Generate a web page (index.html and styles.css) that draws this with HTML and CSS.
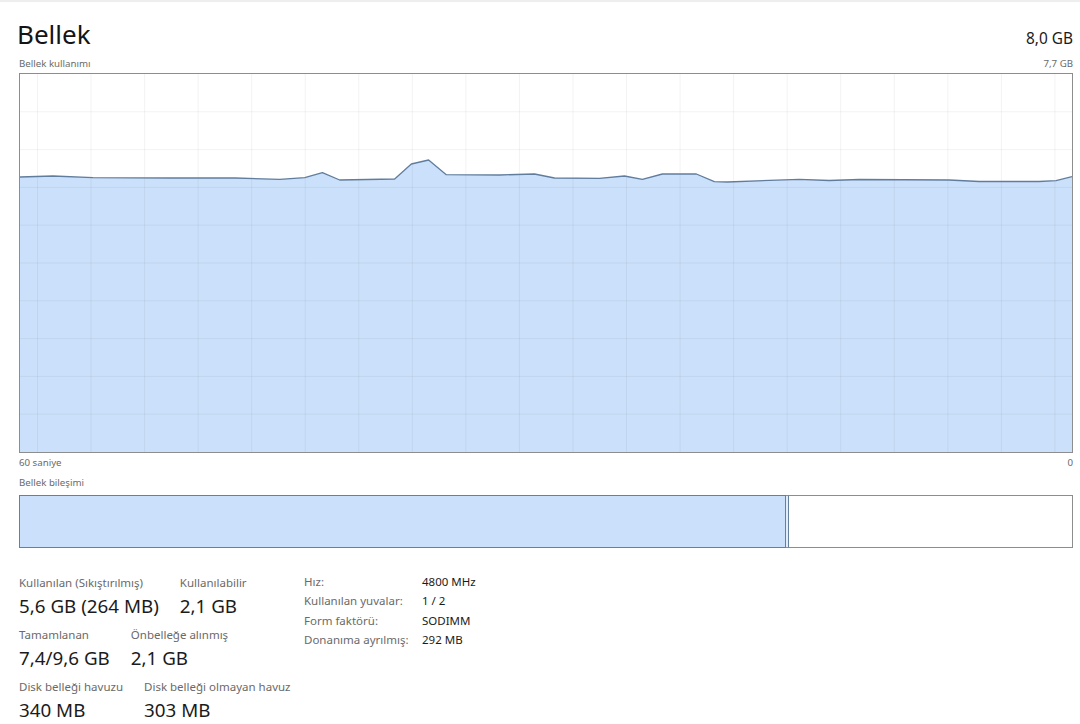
FILE: index.html
```html
<!DOCTYPE html>
<html lang="tr">
<head>
<meta charset="utf-8">
<title>Bellek</title>
<link rel="stylesheet" href="styles.css">
</head>
<body>
<main class="page">
  <header class="head">
    <h1 class="title">Bellek</h1>
    <span class="total">8,0 GB</span>
  </header>
  <div class="caption caption-top">
    <span>Bellek kullanımı</span>
    <span>7,7 GB</span>
  </div>
  <div class="graph">
    <svg class="graph-svg" viewBox="0 0 1053 378" preserveAspectRatio="none">
      <polygon class="area" points="0,103 33,102 73,103.7 150,104 215,104 260,105.3 285,103.7 302.7,98.7 320,106 375,105 391.7,90 409,86 426.7,100.7 480,101 515,100 535,104 580,104.3 605,102 623,105.3 643,100 677,100 695,107.7 708,108 780,105.3 810,106.5 840,105.5 930,106 960,107.5 1020,107.5 1037,106.7 1053,102.7 1053,378 0,378"/>
      <g class="grid">
        <line x1="17.5" y1="0" x2="17.5" y2="378"/>
        <line x1="71.1" y1="0" x2="71.1" y2="378"/>
        <line x1="124.7" y1="0" x2="124.7" y2="378"/>
        <line x1="178.3" y1="0" x2="178.3" y2="378"/>
        <line x1="231.9" y1="0" x2="231.9" y2="378"/>
        <line x1="285.5" y1="0" x2="285.5" y2="378"/>
        <line x1="339.1" y1="0" x2="339.1" y2="378"/>
        <line x1="392.7" y1="0" x2="392.7" y2="378"/>
        <line x1="446.3" y1="0" x2="446.3" y2="378"/>
        <line x1="499.9" y1="0" x2="499.9" y2="378"/>
        <line x1="553.5" y1="0" x2="553.5" y2="378"/>
        <line x1="607.1" y1="0" x2="607.1" y2="378"/>
        <line x1="660.7" y1="0" x2="660.7" y2="378"/>
        <line x1="714.3" y1="0" x2="714.3" y2="378"/>
        <line x1="767.9" y1="0" x2="767.9" y2="378"/>
        <line x1="821.5" y1="0" x2="821.5" y2="378"/>
        <line x1="875.1" y1="0" x2="875.1" y2="378"/>
        <line x1="928.7" y1="0" x2="928.7" y2="378"/>
        <line x1="982.3" y1="0" x2="982.3" y2="378"/>
        <line x1="1035.9" y1="0" x2="1035.9" y2="378"/>
        <line x1="0" y1="37.8" x2="1053" y2="37.8"/>
        <line x1="0" y1="75.6" x2="1053" y2="75.6"/>
        <line x1="0" y1="113.4" x2="1053" y2="113.4"/>
        <line x1="0" y1="151.2" x2="1053" y2="151.2"/>
        <line x1="0" y1="189" x2="1053" y2="189"/>
        <line x1="0" y1="226.8" x2="1053" y2="226.8"/>
        <line x1="0" y1="264.6" x2="1053" y2="264.6"/>
        <line x1="0" y1="302.4" x2="1053" y2="302.4"/>
        <line x1="0" y1="340.2" x2="1053" y2="340.2"/>
      </g>
      <polyline class="trace" points="0,103 33,102 73,103.7 150,104 215,104 260,105.3 285,103.7 302.7,98.7 320,106 375,105 391.7,90 409,86 426.7,100.7 480,101 515,100 535,104 580,104.3 605,102 623,105.3 643,100 677,100 695,107.7 708,108 780,105.3 810,106.5 840,105.5 930,106 960,107.5 1020,107.5 1037,106.7 1053,102.7"/>
    </svg>
  </div>
  <div class="caption caption-axis">
    <span>60 saniye</span>
    <span>0</span>
  </div>
  <div class="caption caption-comp">
    <span>Bellek bileşimi</span>
  </div>
  <div class="composition">
    <div class="seg seg-inuse"></div>
    <div class="seg seg-modified"></div>
    <div class="seg seg-standby"></div>
  </div>
  <section class="details">
    <div class="stats">
      <div class="stat-row">
        <div class="stat"><div class="stat-label">Kullanılan (Sıkıştırılmış)</div><div class="stat-value">5,6 GB (264 MB)</div></div>
        <div class="stat"><div class="stat-label">Kullanılabilir</div><div class="stat-value">2,1 GB</div></div>
      </div>
      <div class="stat-row">
        <div class="stat"><div class="stat-label">Tamamlanan</div><div class="stat-value">7,4/9,6 GB</div></div>
        <div class="stat"><div class="stat-label">Önbelleğe alınmış</div><div class="stat-value">2,1 GB</div></div>
      </div>
      <div class="stat-row">
        <div class="stat"><div class="stat-label">Disk belleği havuzu</div><div class="stat-value">340 MB</div></div>
        <div class="stat"><div class="stat-label">Disk belleği olmayan havuz</div><div class="stat-value">303 MB</div></div>
      </div>
    </div>
    <dl class="specs">
      <dt>Hız:</dt><dd>4800 MHz</dd>
      <dt>Kullanılan yuvalar:</dt><dd>1 / 2</dd>
      <dt>Form faktörü:</dt><dd>SODIMM</dd>
      <dt>Donanıma ayrılmış:</dt><dd>292 MB</dd>
    </dl>
  </section>
</main>
</body>
</html>
```

FILE: styles.css
```css
html, body {
  margin: 0;
  padding: 0;
  background: #ffffff;
}

body {
  font-family: "Noto Sans", "Open Sans", sans-serif;
  color: #1b1b1b;
  width: 1080px;
  height: 724px;
  overflow: hidden;
  border-top: 2px solid #eeeeee;
  box-sizing: border-box;
}

.page {
  padding: 16px 7px 0 19px;
  display: flex;
  flex-direction: column;
}

.head {
  display: flex;
  justify-content: space-between;
  align-items: baseline;
  height: 32px;
}

.title {
  margin: 0 0 0 -2px;
  font-size: 26px;
  line-height: 32px;
  font-weight: 400;
  color: #141414;
}

.total {
  font-size: 15.4px;
  line-height: 32px;
  color: #1b1b1b;
}

.caption {
  display: flex;
  justify-content: space-between;
  font-size: 9.7px;
  line-height: 14px;
  color: #6a6a6a;
}

.caption-top {
  margin-top: 7px;
  margin-bottom: 2px;
}

.caption-axis {
  margin-top: 3px;
}

.caption-comp {
  margin-top: 6px;
  margin-bottom: 5px;
}

.graph {
  height: 378px;
  border: 1px solid #8d8d8d;
  background: #ffffff;
}

.graph-svg {
  display: block;
  width: 100%;
  height: 100%;
}

.area {
  fill: #cbe0fa;
}

.grid line {
  stroke: rgba(0, 0, 0, 0.055);
  stroke-width: 1;
}

.trace {
  fill: none;
  stroke: #617d9e;
  stroke-width: 1.3;
  stroke-linejoin: round;
}

.composition {
  display: flex;
  height: 53px;
}

.seg {
  box-sizing: border-box;
  height: 100%;
}

.seg-inuse {
  flex: 0 0 767px;
  background: #cbe0fa;
  border: 1px solid #64809f;
}

.seg-modified {
  flex: 0 0 2px;
  background: #e3edf9;
  border-top: 1px solid #8d8d8d;
  border-bottom: 1px solid #8d8d8d;
}

.seg-standby {
  flex: 1 1 auto;
  background: #ffffff;
  border: 1px solid #8d8d8d;
  border-left-color: #64809f;
}

.details {
  display: flex;
  margin-top: 24px;
}

.stats {
  flex: 0 0 285px;
  display: flex;
  flex-direction: column;
  gap: 8px;
  padding-top: 3px;
}

.stat-row {
  display: flex;
  gap: 21px;
}

.stat-label {
  font-size: 11.5px;
  line-height: 16px;
  color: #6a6a6a;
}

.stat-value {
  margin-top: 2px;
  font-size: 18.8px;
  line-height: 26px;
  color: #1b1b1b;
}

.specs {
  margin: 0;
  display: grid;
  grid-template-columns: 118px auto;
  grid-auto-rows: 19.3px;
  font-size: 11.5px;
  line-height: 19.3px;
}

.specs dt {
  color: #6a6a6a;
}

.specs dd {
  margin: 0;
  color: #1b1b1b;
}
```
